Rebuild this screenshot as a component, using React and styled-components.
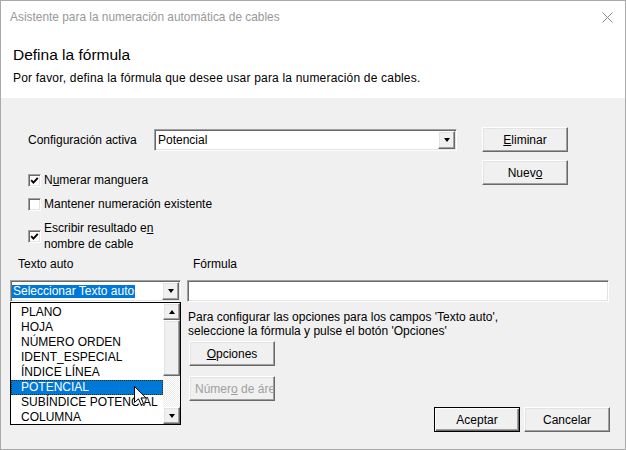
import React from "react";
import styled, { createGlobalStyle, css } from "styled-components";

const GlobalStyle = createGlobalStyle`
  html, body {
    margin: 0;
    padding: 0;
    background: #ffffff;
  }
  body {
    font-family: "Liberation Sans", Arial, sans-serif;
    font-size: 12px;
    color: #000;
  }
  * {
    box-sizing: border-box;
  }
`;

const raised = css`
  border: 1px solid;
  border-color: #ffffff #696969 #696969 #ffffff;
  box-shadow: inset -1px -1px 0 #a0a0a0, inset 1px 1px 0 #e3e3e3;
  background: #f0f0f0;
`;

const sunken = css`
  border: 1px solid;
  border-color: #a0a0a0 #ffffff #ffffff #a0a0a0;
  box-shadow: inset 1px 1px 0 #696969, inset -1px -1px 0 #e3e3e3;
`;

const Window = styled.div`
  width: 626px;
  height: 450px;
  border: 1px solid #aaaaaa;
  background: #f0f0f0;
  display: flex;
  flex-direction: column;
  overflow: hidden;
`;

const TitleBar = styled.div`
  height: 32px;
  background: #ffffff;
  display: flex;
  align-items: center;
  justify-content: space-between;
  padding: 0 12px 0 9px;
`;

const TitleText = styled.span`
  color: #999999;
  font-size: 11.9px;
`;

const Header = styled.div`
  height: 65px;
  background: #ffffff;
  padding: 12px 12px 0 12px;
`;

const Heading = styled.h1`
  margin: 0;
  font-size: 15.5px;
  line-height: 20px;
  font-weight: normal;
`;

const SubHeading = styled.p`
  margin: 6px 0 0 0;
  line-height: 14px;
  letter-spacing: 0.19px;
`;

const Body = styled.div`
  flex: 1;
  padding: 29px 15px 0 9px;
  display: flex;
  flex-direction: column;
`;

const TopSection = styled.div`
  display: flex;
  align-items: flex-start;
  padding-left: 18px;
`;

const LeftTop = styled.div`
  display: flex;
  flex-direction: column;
`;

const ConfigRow = styled.div`
  height: 25px;
  display: flex;
  align-items: center;
`;

const FieldLabel = styled.span`
  width: ${(p) => p.$width || "auto"};
  line-height: 16px;
`;

const Combo = styled.div`
  ${sunken};
  width: ${(p) => p.$width};
  height: 22px;
  background: #ffffff;
  display: flex;
  align-items: center;
  padding: 1px 1px 1px 3px;
`;

const ComboValue = styled.span`
  flex: 1;
  line-height: 14px;
  white-space: nowrap;
`;

const Highlight = styled.span`
  background: #0078d7;
  color: #ffffff;
  padding: 0 1px;
  margin-left: -2px;
  line-height: 13px;
  display: inline-block;
`;

const ArrowButton = styled.div`
  ${raised};
  width: 17px;
  height: ${(p) => p.$height || "17px"};
  display: flex;
  align-items: center;
  justify-content: center;
  flex-shrink: 0;
`;

const Arrow = styled.span`
  width: 0;
  height: 0;
  border-left: 3.5px solid transparent;
  border-right: 3.5px solid transparent;
  ${(p) =>
    p.$up
      ? css`border-bottom: 4px solid #000;`
      : css`border-top: 4px solid #000;`}
`;

const ButtonCol = styled.div`
  margin-left: 25px;
  display: flex;
  flex-direction: column;
  gap: 8px;
`;

const Button = styled.div`
  ${raised};
  width: 86px;
  height: 25px;
  display: flex;
  align-items: center;
  justify-content: ${(p) => (p.$disabled ? "flex-start" : "center")};
  padding: 0 5px;
  white-space: nowrap;
  overflow: hidden;
  color: ${(p) => (p.$disabled ? "#a0a0a0" : "#000")};
  ${(p) =>
    p.$default &&
    css`
      border: 1px solid #000;
      box-shadow: inset 1px 1px 0 #ffffff, inset -1px -1px 0 #696969,
        inset -2px -2px 0 #a0a0a0;
    `}
`;

const Checks = styled.div`
  margin-top: 20px;
  display: flex;
  flex-direction: column;
  gap: 8px;
`;

const CheckRow = styled.div`
  display: flex;
  align-items: center;
  gap: 3px;
  line-height: 16px;
`;

const CheckBox = styled.span`
  ${sunken};
  width: 13px;
  height: 13px;
  background: #ffffff;
  display: flex;
  align-items: center;
  justify-content: center;
  flex-shrink: 0;
`;

const LabelsRow = styled.div`
  margin-top: 4px;
  display: grid;
  grid-template-columns: 177px 1fr;
  line-height: 16px;
`;

const ColLabel = styled.span`
  padding-left: ${(p) => p.$indent};
`;

const MainRow = styled.div`
  margin-top: 8px;
  display: grid;
  grid-template-columns: 171px 1fr;
  column-gap: 6px;
`;

const LeftCol = styled.div`
  display: flex;
  flex-direction: column;
`;

const ListBox = styled.div`
  position: relative;
  height: 123px;
  border: 1px solid #000;
  background: #ffffff;
  display: flex;
`;

const Items = styled.ul`
  list-style: none;
  margin: 0;
  padding: 2px 0 0 0;
  flex: 1;
`;

const Item = styled.li`
  height: 15px;
  line-height: 13px;
  padding-left: 9px;
  white-space: nowrap;
  border: 1px solid transparent;
  ${(p) =>
    p.$selected &&
    css`
      background: #0078d7;
      color: #ffffff;
      border: 1px dotted #3a2a10;
    `}
`;

const ScrollBar = styled.div`
  width: 17px;
  display: flex;
  flex-direction: column;
`;

const Thumb = styled.div`
  ${raised};
  height: 56px;
`;

const Track = styled.div`
  flex: 1;
  background: repeating-conic-gradient(#ffffff 0 25%, #ececec 0 50%) 0 0 / 2px
    2px;
`;

const Cursor = styled.svg`
  position: absolute;
  left: 123px;
  top: 83px;
  pointer-events: none;
`;

const RightCol = styled.div`
  display: flex;
  flex-direction: column;
  align-items: flex-start;
`;

const TextInput = styled.div`
  ${sunken};
  width: 422px;
  height: 22px;
  background: #ffffff;
`;

const HelpText = styled.p`
  margin: 8px 0 0 0;
  padding-left: 1px;
  line-height: 14px;
`;

const StackedButton = styled(Button)`
  margin-top: ${(p) => p.$top};
  margin-left: 2px;
`;

const Footer = styled.div`
  margin-top: 6px;
  align-self: stretch;
  display: flex;
  justify-content: flex-end;
  gap: 4px;
`;

const CheckMark = () => (
  <svg width="9" height="9" viewBox="0 0 9 9">
    <polyline
      points="1.2,4.2 3.4,6.6 7.8,1.8"
      fill="none"
      stroke="#000"
      strokeWidth="1.9"
    />
  </svg>
);

const items = [
  "PLANO",
  "HOJA",
  "NÚMERO ORDEN",
  "IDENT_ESPECIAL",
  "ÍNDICE LÍNEA",
  "POTENCIAL",
  "SUBÍNDICE POTENCIAL",
  "COLUMNA",
];

export default function App() {
  return (
    <>
      <GlobalStyle />
      <Window>
        <TitleBar>
          <TitleText>Asistente para la numeración automática de cables</TitleText>
          <svg width="11" height="11" viewBox="0 0 11 11">
            <path d="M0.5 0.5 L10.5 10.5 M10.5 0.5 L0.5 10.5" stroke="#8a8a8a" strokeWidth="1" />
          </svg>
        </TitleBar>
        <Header>
          <Heading>Defina la fórmula</Heading>
          <SubHeading>
            Por favor, defina la fórmula que desee usar para la numeración de cables.
          </SubHeading>
        </Header>
        <Body>
          <TopSection>
            <LeftTop>
              <ConfigRow>
                <FieldLabel $width="126px">Configuración activa</FieldLabel>
                <Combo $width="303px">
                  <ComboValue>Potencial</ComboValue>
                  <ArrowButton $height="18px">
                    <Arrow />
                  </ArrowButton>
                </Combo>
              </ConfigRow>
              <Checks>
                <CheckRow>
                  <CheckBox>
                    <CheckMark />
                  </CheckBox>
                  <span>
                    N<u>u</u>merar manguera
                  </span>
                </CheckRow>
                <CheckRow>
                  <CheckBox />
                  <span>Mantener numeración existente</span>
                </CheckRow>
                <CheckRow>
                  <CheckBox>
                    <CheckMark />
                  </CheckBox>
                  <span>
                    Escribir resultado e<u>n</u>
                    <br />
                    nombre de cable
                  </span>
                </CheckRow>
              </Checks>
            </LeftTop>
            <ButtonCol>
              <Button>
                <span>
                  <u>E</u>liminar
                </span>
              </Button>
              <Button>
                <span>
                  Nuev<u>o</u>
                </span>
              </Button>
            </ButtonCol>
          </TopSection>

          <LabelsRow>
            <ColLabel $indent="8px">Texto auto</ColLabel>
            <ColLabel $indent="6px">Fórmula</ColLabel>
          </LabelsRow>

          <MainRow>
            <LeftCol>
              <Combo $width="171px">
                <ComboValue>
                  <Highlight>Seleccionar Texto auto</Highlight>
                </ComboValue>
                <ArrowButton $height="18px">
                  <Arrow />
                </ArrowButton>
              </Combo>
              <ListBox>
                <Items>
                  {items.map((it) => (
                    <Item key={it} $selected={it === "POTENCIAL"}>
                      {it}
                    </Item>
                  ))}
                </Items>
                <ScrollBar>
                  <ArrowButton>
                    <Arrow $up />
                  </ArrowButton>
                  <Thumb />
                  <Track />
                  <ArrowButton>
                    <Arrow />
                  </ArrowButton>
                </ScrollBar>
                <Cursor width="13" height="20" viewBox="0 0 13 20">
                  <path
                    d="M0.5 0.5 L0.5 16.5 L4.5 12.8 L7.2 18.8 L9.6 17.8 L7 11.9 L12 11.9 Z"
                    fill="#ffffff"
                    stroke="#000"
                    strokeWidth="1"
                    strokeLinejoin="miter"
                  />
                </Cursor>
              </ListBox>
            </LeftCol>

            <RightCol>
              <TextInput />
              <HelpText>
                Para configurar las opciones para los campos 'Texto auto',
                <br />
                seleccione la fórmula y pulse el botón 'Opciones'
              </HelpText>
              <StackedButton $top="3px">
                <span>
                  <u>O</u>pciones
                </span>
              </StackedButton>
              <StackedButton $top="10px" $disabled>
                <span>
                  Númer<u>o</u> de área
                </span>
              </StackedButton>
              <Footer>
                <Button $default>Aceptar</Button>
                <Button>Cancelar</Button>
              </Footer>
            </RightCol>
          </MainRow>
        </Body>
      </Window>
    </>
  );
}
